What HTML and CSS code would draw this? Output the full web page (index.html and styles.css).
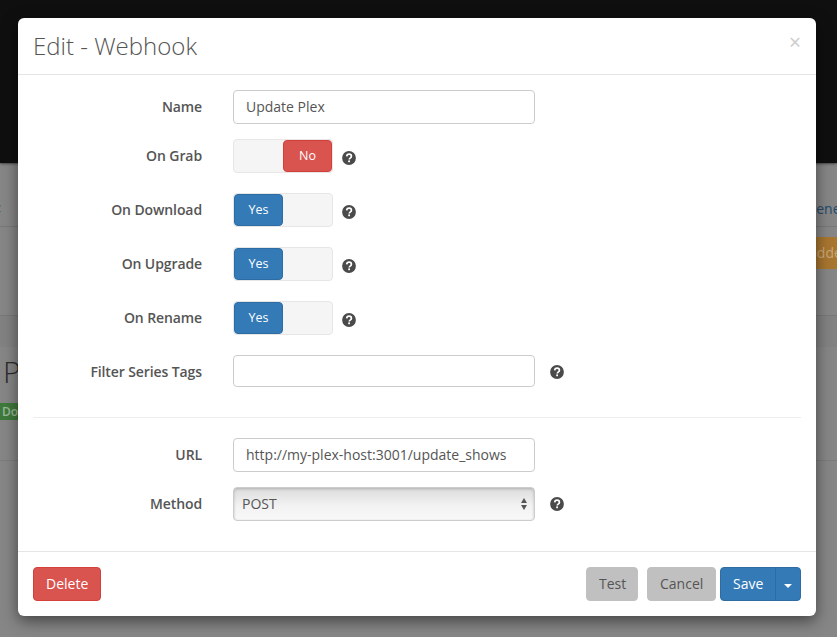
FILE: index.html
```html
<!DOCTYPE html>
<html lang="en">
<head>
    <meta charset="UTF-8">
    <title>Edit - Webhook</title>
    <link rel="stylesheet" href="styles.css">
</head>
<body>
    <!-- page behind the dialog -->
    <div class="page-nav"></div>
    <div class="page-tabs">
        <span class="page-back">&lt;</span>
        <a class="page-tab">General</a>
    </div>
    <div class="page-actions">
        <span class="page-add">Hidden</span>
    </div>
    <div class="page-gap"></div>
    <div class="page-card">
        <div class="page-card-title">Plex</div>
        <span class="page-card-tag">Download</span>
    </div>

    <div class="modal">
        <div class="modal-header">
            <h3 class="modal-title">Edit - Webhook</h3>
            <span class="modal-close">&times;</span>
        </div>

        <div class="modal-body">
            <div class="form-row">
                <label class="form-label">Name</label>
                <input class="form-input" type="text" value="Update Plex">
            </div>

            <div class="form-row form-row-switch">
                <label class="form-label">On Grab</label>
                <div class="switch">
                    <span class="switch-half"></span>
                    <span class="switch-half switch-no">No</span>
                </div>
                <svg class="help help-switch" viewBox="0 0 14 14"><use href="#help-icon"/></svg>
            </div>

            <div class="form-row form-row-switch">
                <label class="form-label">On Download</label>
                <div class="switch">
                    <span class="switch-half switch-yes">Yes</span>
                    <span class="switch-half"></span>
                </div>
                <svg class="help help-switch" viewBox="0 0 14 14"><use href="#help-icon"/></svg>
            </div>

            <div class="form-row form-row-switch">
                <label class="form-label">On Upgrade</label>
                <div class="switch">
                    <span class="switch-half switch-yes">Yes</span>
                    <span class="switch-half"></span>
                </div>
                <svg class="help help-switch" viewBox="0 0 14 14"><use href="#help-icon"/></svg>
            </div>

            <div class="form-row form-row-switch">
                <label class="form-label">On Rename</label>
                <div class="switch">
                    <span class="switch-half switch-yes">Yes</span>
                    <span class="switch-half"></span>
                </div>
                <svg class="help help-switch" viewBox="0 0 14 14"><use href="#help-icon"/></svg>
            </div>

            <div class="form-row form-row-tags">
                <label class="form-label">Filter Series Tags</label>
                <input class="form-input form-input-tags" type="text">
                <svg class="help help-tags" viewBox="0 0 14 14"><use href="#help-icon"/></svg>
            </div>

            <hr class="form-divider">

            <div class="form-row">
                <label class="form-label">URL</label>
                <input class="form-input" type="text" value="http://my-plex-host:3001/update_shows">
            </div>

            <div class="form-row">
                <label class="form-label">Method</label>
                <div class="select-wrap">
                    <select class="form-select">
                        <option>POST</option>
                        <option>PUT</option>
                    </select>
                    <span class="select-arrows"></span>
                </div>
                <svg class="help" viewBox="0 0 14 14"><use href="#help-icon"/></svg>
            </div>
        </div>

        <div class="modal-footer">
            <button class="btn btn-danger">Delete</button>
            <div class="footer-right">
                <button class="btn btn-grey btn-test">Test</button>
                <button class="btn btn-grey btn-cancel">Cancel</button>
                <div class="btn-split">
                    <button class="btn btn-primary btn-save">Save</button>
                    <button class="btn btn-primary btn-caret"><span class="caret"></span></button>
                </div>
            </div>
        </div>
    </div>

    <svg class="icon-defs" width="0" height="0">
        <symbol id="help-icon" viewBox="0 0 14 14">
            <circle cx="7" cy="7" r="6.9" fill="#4a4a4a"/>
            <path d="M4.7 5.4c.1-1.4 1-2.2 2.4-2.2 1.3 0 2.3.8 2.3 2 0 1-.6 1.5-1.2 1.9-.6.4-.9.7-.9 1.3" fill="none" stroke="#fff" stroke-width="1.7"/>
            <rect x="6.2" y="9.4" width="1.8" height="1.8" fill="#fff"/>
        </symbol>
    </svg>
</body>
</html>
```

FILE: styles.css
```css
html, body {
    height: 100%;
}

body {
    margin: 0;
    overflow: hidden;
    background: #868686;
    font-family: "Open Sans", sans-serif;
    font-size: 14px;
    color: #555;
}

/* page behind the dialog */
.page-nav {
    height: 163px;
    background: #0f0f0f;
    box-shadow: 0 0 3px #0f0f0f;
}

.page-tabs {
    height: 64px;
    display: flex;
    align-items: center;
    padding-top: 27px;
    box-sizing: border-box;
    border-bottom: 1px solid #787878;
    white-space: nowrap;
    color: #1f4a6e;
}

.page-back {
    margin-left: -7px;
}

.page-tab {
    margin-left: 805px;
}

.page-actions {
    height: 89px;
    box-sizing: border-box;
    padding: 10px 0 0 803px;
    border-bottom: 1px solid #787878;
    white-space: nowrap;
}

.page-add {
    display: block;
    width: 60px;
    height: 32px;
    line-height: 32px;
    background: #a8762f;
    color: #c9a878;
}

.page-gap {
    height: 31px;
    background: #828282;
}

.page-card {
    height: 114px;
    box-sizing: border-box;
    border-bottom: 1px solid #7c7c7c;
    padding: 4px 0 0 3px;
    white-space: nowrap;
}

.page-card-title {
    font-size: 30px;
    font-weight: 300;
    line-height: 42px;
    color: #2c2c2c;
}

.page-card-tag {
    display: block;
    width: 60px;
    height: 17px;
    margin: 10px 0 0 -3px;
    padding-left: 2px;
    background: #3f7a3c;
    color: #9cb89a;
    font-size: 12px;
    font-weight: 600;
    line-height: 17px;
}

/* dialog */
.modal {
    position: absolute;
    top: 18px;
    left: 18px;
    width: 798px;
    background: #fff;
    border-radius: 6px;
    box-shadow: 0 5px 15px rgba(0, 0, 0, 0.5);
}

.modal-header {
    position: relative;
    height: 56px;
    padding: 0 15px;
    display: flex;
    align-items: center;
    border-bottom: 1px solid #e5e5e5;
}

.modal-title {
    margin: 0;
    padding-bottom: 2px;
    font-size: 24px;
    font-weight: 300;
    color: #555;
}

.modal-close {
    position: absolute;
    top: 9px;
    right: 15px;
    font-size: 21px;
    line-height: 30px;
    color: #ccc;
}

.modal-body {
    padding: 15px 15px 15px;
}

.form-row {
    display: flex;
    align-items: center;
    margin-bottom: 15px;
}

.form-row-switch {
    margin-bottom: 20px;
}

.form-label {
    width: 169px;
    margin-right: 31px;
    padding-bottom: 2px;
    text-align: right;
    font-weight: 600;
    letter-spacing: -0.1px;
    color: #555;
}

.form-row-tags .form-label {
    padding-bottom: 0;
}

.form-input {
    width: 302px;
    height: 34px;
    box-sizing: border-box;
    padding: 5px 12px 7px;
    border: 1px solid #ccc;
    border-radius: 4px;
    font-family: inherit;
    font-size: 14px;
    color: #555;
    background: #fff;
}

.form-input-tags {
    height: 32px;
}

.switch {
    display: flex;
    width: 100px;
    height: 34px;
    box-sizing: border-box;
    border: 1px solid #e6e6e6;
    border-radius: 4px;
    background: #f5f5f5;
}

.switch-half {
    width: 49px;
    box-sizing: border-box;
    text-align: center;
    font-size: 12.5px;
    line-height: 30px;
    color: #fff;
    border-radius: 4px;
}

.switch-yes {
    background: #337ab7;
    border: 1px solid #2e6da4;
}

.switch-no {
    background: #d9534f;
    border: 1px solid #d43f3a;
}

.help {
    flex: none;
    width: 14px;
    height: 14px;
    margin-left: 15px;
}

.help-switch {
    margin-left: 9px;
    margin-top: 4px;
}

.help-tags {
    margin-top: 2px;
}

.form-divider {
    margin: 30px 0 20px;
    border: 0;
    border-top: 1px solid #eee;
}

.select-wrap {
    position: relative;
    width: 302px;
    height: 34px;
}

.form-select {
    appearance: none;
    display: block;
    width: 100%;
    height: 100%;
    padding: 0 8px 2px;
    border: 1px solid #ccc;
    border-radius: 4px;
    font-family: inherit;
    font-size: 14px;
    color: #555;
    background: linear-gradient(#dcdcdc, #f2f2f2 55%, #f8f8f8);
    box-shadow: inset 0 1px 3px rgba(0, 0, 0, 0.2);
}

.select-arrows {
    position: absolute;
    top: 11px;
    right: 8px;
    width: 6px;
    height: 12px;
}

.select-arrows::before,
.select-arrows::after {
    content: "";
    position: absolute;
    left: 0;
    border-left: 3px solid transparent;
    border-right: 3px solid transparent;
}

.select-arrows::before {
    top: 0;
    border-bottom: 5px solid #555;
}

.select-arrows::after {
    bottom: 0;
    border-top: 5px solid #555;
}

.modal-footer {
    display: flex;
    justify-content: space-between;
    padding: 15px;
    border-top: 1px solid #e5e5e5;
}

.footer-right {
    display: flex;
}

.btn {
    height: 34px;
    box-sizing: border-box;
    padding: 0 12px 2px;
    border: 1px solid transparent;
    border-radius: 4px;
    font-family: inherit;
    font-size: 14px;
}

.btn-danger {
    width: 68px;
    background: #d9534f;
    border-color: #d43f3a;
    color: #fff;
}

.btn-grey {
    background: #c0c0c0;
    border-color: #c0c0c0;
    color: #555;
}

.btn-test {
    width: 52px;
    margin-right: 9px;
}

.btn-cancel {
    width: 69px;
    margin-right: 4px;
}

.btn-split {
    display: flex;
}

.btn-primary {
    background: #337ab7;
    border-color: #2e6da4;
    color: #fff;
}

.btn-save {
    width: 56px;
    border-radius: 4px 0 0 4px;
}

.btn-caret {
    width: 26px;
    margin-left: -1px;
    padding: 0;
    border-radius: 0 4px 4px 0;
}

.caret {
    display: inline-block;
    vertical-align: middle;
    border-top: 4px solid #fff;
    border-left: 4px solid transparent;
    border-right: 4px solid transparent;
}

.icon-defs {
    position: absolute;
}
```
